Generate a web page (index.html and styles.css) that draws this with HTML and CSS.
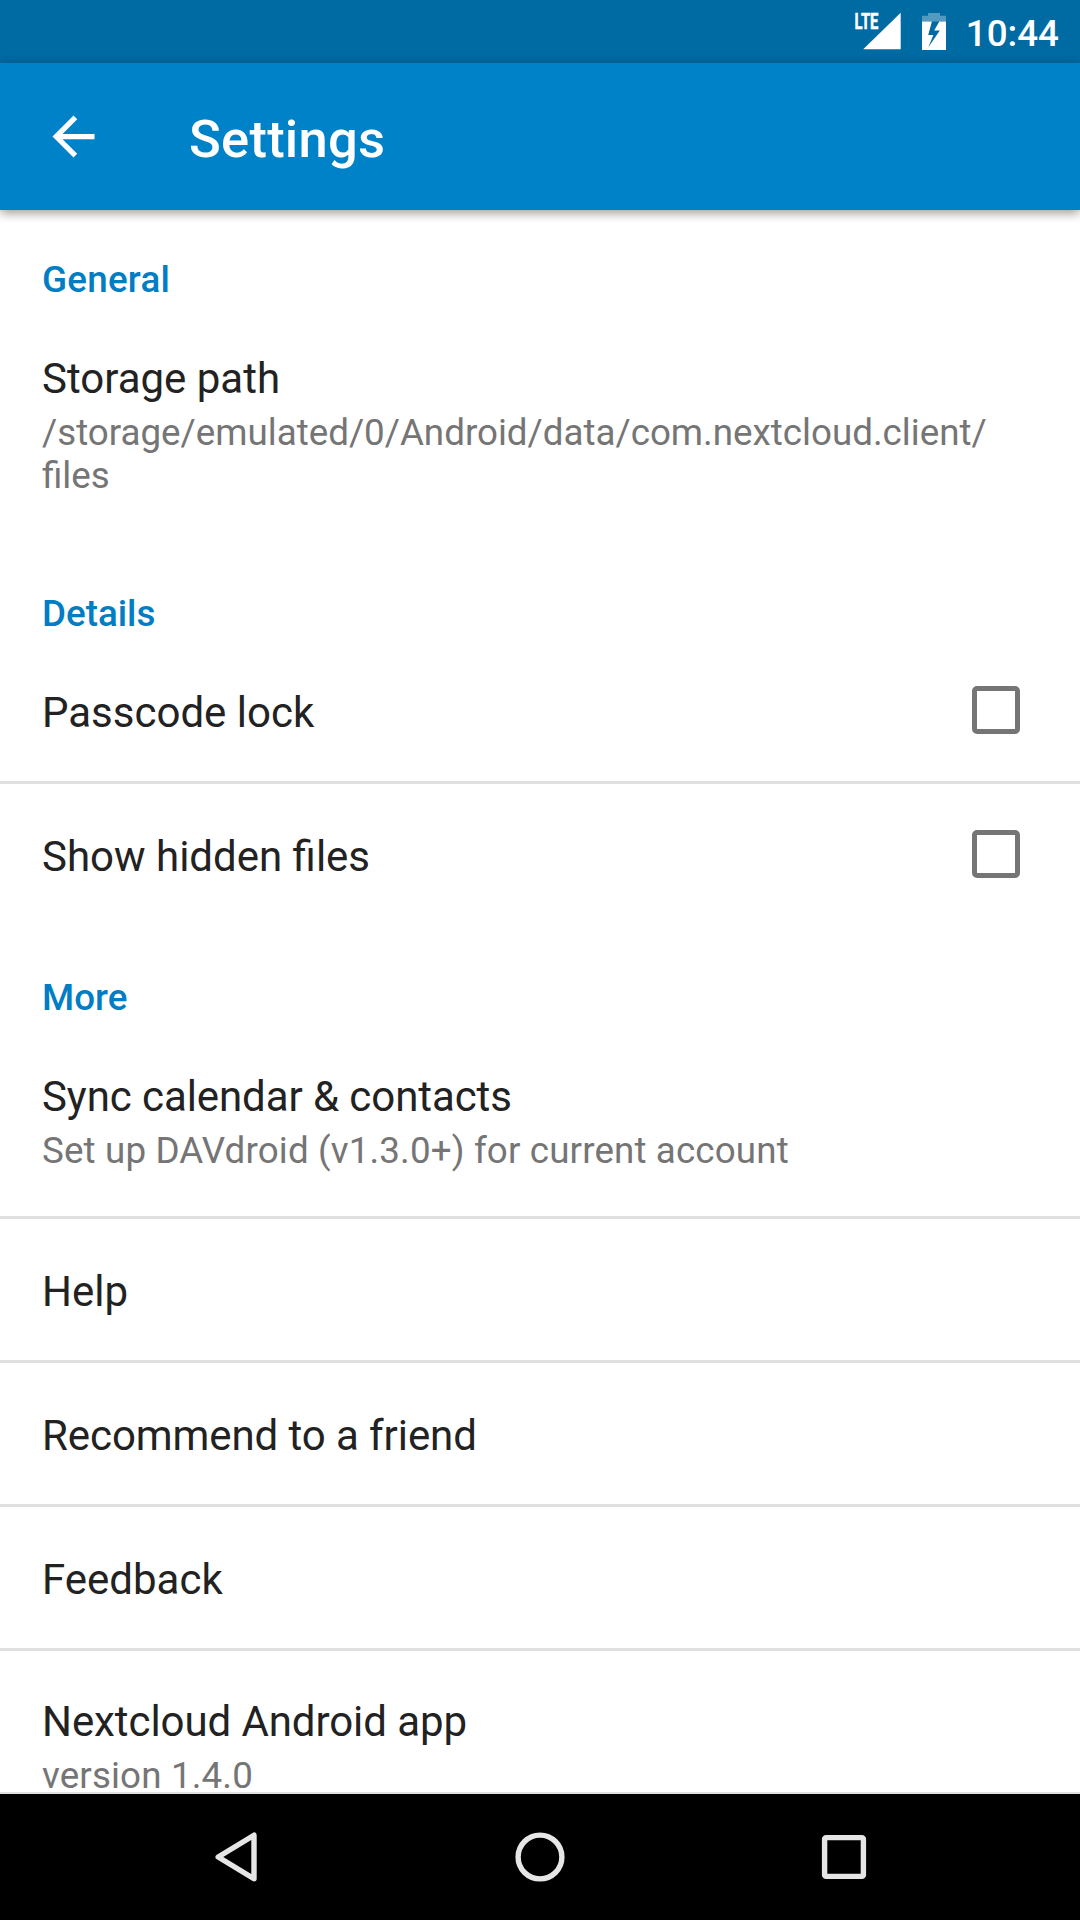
FILE: index.html
```html
<!DOCTYPE html>
<html lang="en">
<head>
<meta charset="utf-8">
<title>Settings</title>
<link rel="stylesheet" href="styles.css">
</head>
<body>
<div class="screen">
  <div class="status-bar">
    <svg class="signal" width="48" height="40" viewBox="0 0 48 40">
      <text class="lte" x="0.5" y="17.3" textLength="24" lengthAdjust="spacingAndGlyphs">LTE</text>
      <path fill="#fff" d="M46.7 .8V37.3H9.2z"/>
    </svg>
    <svg class="battery" width="24" height="37" viewBox="0 0 24 37">
      <path fill="#fff" fill-opacity=".32" d="M0 8.6V2.8h6V0h12v2.8h6v5.8z"/>
      <path fill="#fff" fill-rule="evenodd" d="M0 8.6h9.9L6.2 22h5.2L6.2 34.4 17.8 17.6h-5.6L17.3 8.6H24V37H0z"/>
    </svg>
    <span class="clock">10:44</span>
  </div>
  <header class="toolbar">
    <svg class="back" width="63" height="63" viewBox="0 0 24 24"><path fill="#fff" d="M20 11H7.83l5.59-5.59L12 4l-8 8 8 8 1.41-1.41L7.83 13H20v-2z"/></svg>
    <h1 class="title">Settings</h1>
  </header>
  <main class="content">
    <section class="group">
      <h2 class="heading spaced">General</h2>
      <div class="row">
        <div class="name">Storage path</div>
        <div class="summary">/storage/emulated/0/Android/data/com.nextcloud.client/<wbr>files</div>
      </div>
    </section>
    <section class="group">
      <h2 class="heading">Details</h2>
      <div class="row with-check"><div class="name">Passcode lock</div><span class="check"></span></div>
      <div class="row with-check"><div class="name">Show hidden files</div><span class="check"></span></div>
    </section>
    <section class="group">
      <h2 class="heading">More</h2>
      <div class="row">
        <div class="name tight">Sync calendar &amp; contacts</div>
        <div class="summary loose">Set up DAVdroid (v1.3.0+) for current account</div>
      </div>
      <div class="row"><div class="name">Help</div></div>
      <div class="row"><div class="name tight">Recommend to a friend</div></div>
      <div class="row"><div class="name">Feedback</div></div>
      <div class="row about">
        <div class="name tight">Nextcloud Android app</div>
        <div class="summary loose">version 1.4.0</div>
      </div>
    </section>
  </main>
  <nav class="nav-bar">
    <svg width="50" height="50" viewBox="0 0 50 50"><path class="nav-icon" stroke-linejoin="round" d="M43 3.2V46.8L7.2 25z"/></svg>
    <svg width="50" height="50" viewBox="0 0 50 50"><circle class="nav-icon" cx="25" cy="25" r="21.9"/></svg>
    <svg width="50" height="50" viewBox="0 0 50 50"><rect class="nav-icon" x="5.6" y="5.6" width="38.8" height="38.8" rx="1.5"/></svg>
  </nav>
</div>
</body>
</html>
```
FILE: styles.css
```css
* { box-sizing: border-box; }
body { margin: 0; background: #fff; font-family: Roboto, sans-serif; }
.screen { display: flex; flex-direction: column; width: 1080px; height: 1920px; overflow: hidden; }

.status-bar { display: flex; flex: none; height: 63px; padding: 12px 21px 0 0; justify-content: flex-end; background: #006aa3; color: #fff; }
.signal { margin-right: 20px; overflow: visible; }
.lte { font: 700 22.5px Roboto, sans-serif; fill: #fff; stroke: #fff; stroke-width: .5px; }
.battery { margin: 1px 20px 0 0; }
.clock { font-size: 36.75px; font-weight: 500; line-height: 43px; }

.toolbar { display: flex; flex: none; height: 147px; padding-left: 42px; background: #0082c9; color: #fff; position: relative; box-shadow: 0 3px 10px rgba(0, 0, 0, .4); }
.back { margin: 42px 84px 0 0; }
.title { margin: 45px 0 0; font-size: 52.5px; font-weight: 500; line-height: 62px; letter-spacing: .25px; }

.content { flex: 1; min-height: 0; overflow: hidden; }
.group + .group { padding-top: 3px; }
.heading { margin: 0; height: 96px; padding: 48px 42px 5px; font-size: 36.75px; font-weight: 500; line-height: 43px; color: #007dc3; }
.spaced { letter-spacing: .25px; }
.row { padding: 48px 42px 44px; }
.row + .row { border-top: 3px solid #e0e0e0; }
.with-check { display: flex; justify-content: space-between; padding-right: 60px; }
.check { width: 48px; height: 48px; margin: -2px 0 0; border: 5.3px solid #757575; border-radius: 5px; }
.name { font-size: 42px; line-height: 49px; color: #222; }
.tight { letter-spacing: -.08px; }
.summary { margin-top: 8px; font-size: 36.75px; line-height: 43px; color: #757575; }
.loose { letter-spacing: .14px; }
.about { height: 147px; padding: 46px 42px 0; border-bottom: 3px solid #e0e0e0; }

.nav-bar { display: flex; flex: none; height: 126px; padding: 38px 211px 0; justify-content: space-between; background: #000; }
.nav-icon { fill: none; stroke: #e6e6e6; stroke-width: 5.4; }
```
